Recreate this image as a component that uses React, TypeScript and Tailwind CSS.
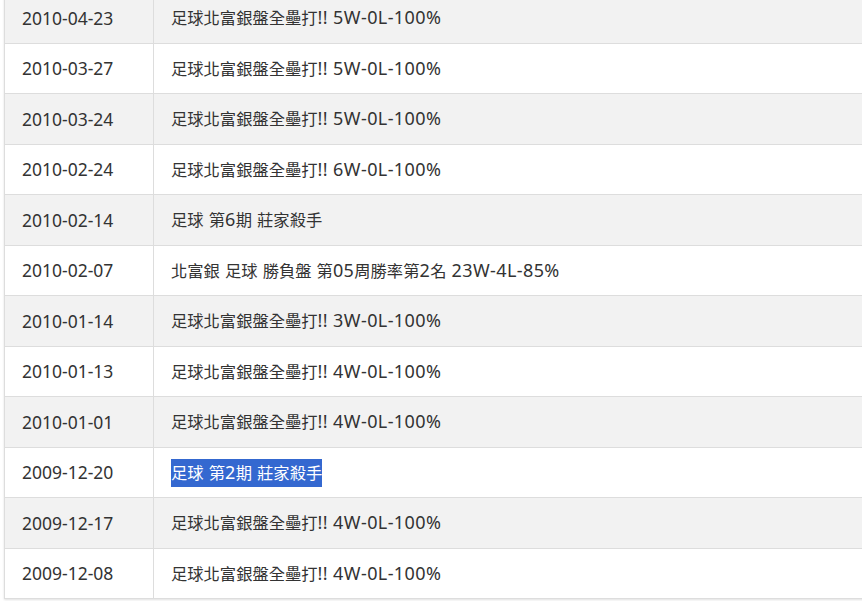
const rows = [
  { date: "2010-04-23", title: "足球北富銀盤全壘打!! 5W-0L-100%" },
  { date: "2010-03-27", title: "足球北富銀盤全壘打!! 5W-0L-100%" },
  { date: "2010-03-24", title: "足球北富銀盤全壘打!! 5W-0L-100%" },
  { date: "2010-02-24", title: "足球北富銀盤全壘打!! 6W-0L-100%" },
  { date: "2010-02-14", title: "足球 第6期 莊家殺手" },
  { date: "2010-02-07", title: "北富銀 足球 勝負盤 第05周勝率第2名 23W-4L-85%" },
  { date: "2010-01-14", title: "足球北富銀盤全壘打!! 3W-0L-100%" },
  { date: "2010-01-13", title: "足球北富銀盤全壘打!! 4W-0L-100%" },
  { date: "2010-01-01", title: "足球北富銀盤全壘打!! 4W-0L-100%" },
  { date: "2009-12-20", title: "足球 第2期 莊家殺手", selected: true },
  { date: "2009-12-17", title: "足球北富銀盤全壘打!! 4W-0L-100%" },
  { date: "2009-12-08", title: "足球北富銀盤全壘打!! 4W-0L-100%" },
];

// latin glyphs render a bit larger than the CJK ones in the original font
const MixedText = ({ text }: { text: string }) => {
  const parts = text.match(/[\x00-\x7F]+|[^\x00-\x7F]+/g) ?? [];
  return (
    <>
      {parts.map((part, i) =>
        /^[\x00-\x7F]+$/.test(part) ? (
          <span key={i} className="text-[18px] tracking-[0.4px]">
            {part}
          </span>
        ) : (
          <span key={i}>{part}</span>
        )
      )}
    </>
  );
};

const App = () => {
  return (
    <div className="h-[601px] w-[862px] overflow-hidden bg-white font-['Noto_Sans','Noto_Sans_CJK_TC',sans-serif] text-[16.3px] text-[#333]">
      <div className="ml-[4px] -mt-[7px] w-[900px] border-l border-[#ddd] shadow-[0_1px_2px_rgba(0,0,0,0.12)]">
        {rows.map((row, i) => (
          <div
            key={row.date + i}
            className={`flex h-[50.5px] items-center border-b border-[#ddd] ${i % 2 === 0 ? "bg-[#f2f2f2]" : "bg-white"}`}
          >
            <div className="flex h-full w-[149px] shrink-0 items-center border-r border-[#ddd] pl-[17px] text-[17.5px]">
              {row.date}
            </div>
            <div className="pl-[17px]">
              {row.selected ? (
                <span className="bg-[#3468d0] py-[3px] text-white">
                  <MixedText text={row.title} />
                </span>
              ) : (
                <MixedText text={row.title} />
              )}
            </div>
          </div>
        ))}
      </div>
    </div>
  );
};

export default App;
